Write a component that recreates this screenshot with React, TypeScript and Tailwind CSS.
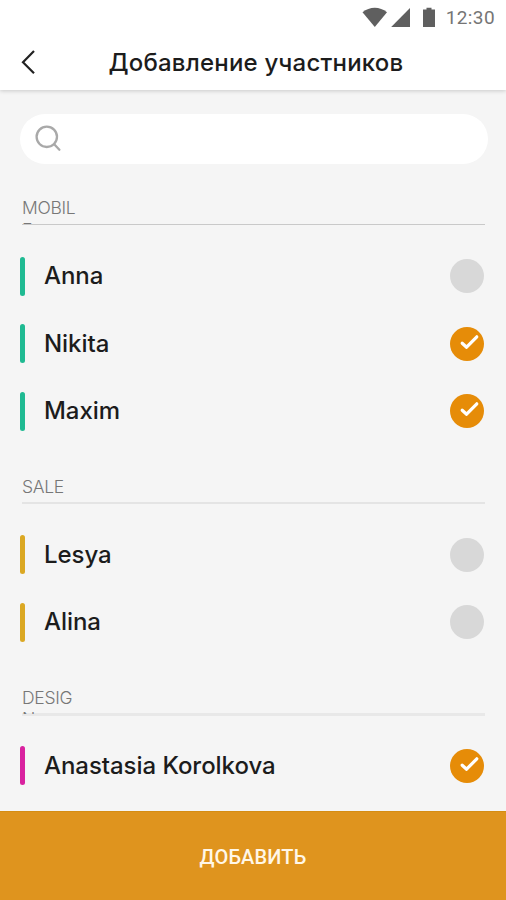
type Member = { name: string; selected: boolean };
type Group = { title: string; bar: string; rule: string; members: Member[] };

const groups: Group[] = [
  {
    title: "MOBILE",
    bar: "bg-[#1fba92]",
    rule: "h-px bg-[#c9c9c9]",
    members: [
      { name: "Anna", selected: false },
      { name: "Nikita", selected: true },
      { name: "Maxim", selected: true },
    ],
  },
  {
    title: "SALE",
    bar: "bg-[#dba823]",
    rule: "h-[2px] -mt-px bg-[#e4e4e4]",
    members: [
      { name: "Lesya", selected: false },
      { name: "Alina", selected: false },
    ],
  },
  {
    title: "DESIGN",
    bar: "bg-[#d9229f]",
    rule: "h-[3px] -mt-px bg-[#e8e8e8]",
    members: [{ name: "Anastasia Korolkova", selected: true }],
  },
];

function StatusBar() {
  return (
    <div className="flex h-[34px] items-center justify-end pr-[11px] text-[#5f5f5f]">
      <svg width="76" height="22" viewBox="0 0 76 22" fill="currentColor">
        <path d="M0.5 6.2C7.5 0.2 18 0.2 25 6.2L12.8 21Z" />
        <path d="M29.2 21L48 2V21Z" />
        <path d="M61 3.5H64.5V1.8H69.5V3.5H73V21H61Z" />
      </svg>
      <span className="ml-[8px] pt-px font-['Roboto',sans-serif] text-[19px] leading-[22px] tracking-[0.4px] text-[#757575]">
        12:30
      </span>
    </div>
  );
}

function Toggle({ selected }: { selected: boolean }) {
  return (
    <span className={`block size-[34px] rounded-full ${selected ? "bg-[#e68c08]" : "bg-[#d8d8d8]"}`}>
      {selected && (
        <svg width="34" height="34" viewBox="0 0 34 34" fill="none">
          <path d="M12.2 16.2L16.6 20.2L26.8 9.8" stroke="white" strokeWidth="3.2" strokeLinecap="round" strokeLinejoin="round" />
        </svg>
      )}
    </span>
  );
}

export default function App() {
  return (
    <div className="flex h-[900px] w-[506px] flex-col overflow-hidden bg-[#f5f5f5] font-['Inter',sans-serif] text-[#1c1c1c]">
      <header className="h-[90px] shrink-0 bg-white shadow-[0_1px_4px_rgba(0,0,0,0.18)]">
        <StatusBar />
        <div className="flex h-[56px] items-center">
          <svg className="ml-[21px] shrink-0" width="15" height="26" viewBox="0 0 15 26" fill="none" stroke="#222" strokeWidth="2.2">
            <path d="M13 2L2 13.2L13 24.3" />
          </svg>
          <h1 className="ml-[72.5px] pt-[2px] text-[24px] leading-[30px] font-medium tracking-[0.21px] whitespace-nowrap">
            Добавление участников
          </h1>
        </div>
      </header>

      <main className="min-h-0 flex-1 overflow-hidden pt-[23.5px]">
        <div className="ml-[20px] flex h-[50.5px] w-[468px] items-center rounded-full bg-white pl-[15px]">
          <svg width="27" height="27" viewBox="0 0 27 27" fill="none" stroke="#a9a9a9" strokeWidth="2.3" strokeLinecap="round">
            <circle cx="11.8" cy="11.8" r="10.2" />
            <path d="M19.2 19.2L24.4 24.7" />
          </svg>
        </div>

        <div className="pt-[2.5px]">
          {groups.map((g) => (
            <section key={g.title}>
              <div className="h-[76px] pt-[30.5px]">
                <div className="ml-[22px] h-[27px] w-[55px] overflow-hidden text-[17.5px] leading-[21.5px] font-light tracking-[-0.3px] break-all text-[#777]">
                  {g.title}
                </div>
                <div className={`ml-[22px] w-[463px] ${g.rule}`} />
              </div>
              {g.members.map((m) => (
                <div key={m.name} className="flex h-[67.5px] items-center pr-[22px] pl-[20px]">
                  <span className={`h-[39px] w-[5px] rounded-full ${g.bar}`} />
                  <span className="ml-[19px] flex-1 text-[24px] leading-[30px] font-medium tracking-[-0.05px]">{m.name}</span>
                  <Toggle selected={m.selected} />
                </div>
              ))}
            </section>
          ))}
        </div>
      </main>

      <button className="h-[89.5px] shrink-0 border-t border-[#d58d14] bg-[#df941e] pt-[3px] font-['Roboto',sans-serif] text-[20px] font-medium tracking-[0.15px] text-[#fff7e8]">
        ДОБАВИТЬ
      </button>
    </div>
  );
}
